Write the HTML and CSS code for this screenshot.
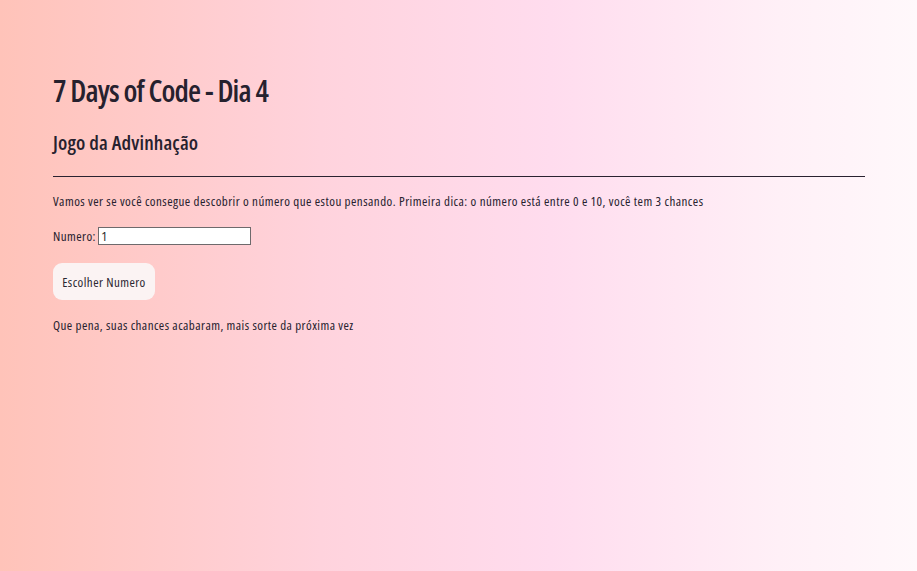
FILE: index.html
```html
<!DOCTYPE html>
<html lang="pt-BR">
<head>
<meta charset="utf-8">
<title>7 Days of Code - Dia 4</title>
<link rel="stylesheet" href="styles.css">
</head>
<body>
<main class="page">
  <h1 class="title">7 Days of Code - Dia 4</h1>
  <h2 class="subtitle">Jogo da Advinhação</h2>
  <hr class="rule">
  <p class="text">Vamos ver se você consegue descobrir o número que estou pensando. Primeira dica: o número está entre 0 e 10, você tem 3 chances</p>
  <div class="field">
    <label class="label" for="numero">Numero:</label>
    <input class="input" id="numero" type="text" value="1">
  </div>
  <button class="btn" type="button">Escolher Numero</button>
  <p class="text result">Que pena, suas chances acabaram, mais sorte da próxima vez</p>
</main>
</body>
</html>
```
FILE: styles.css
```css
html, body {
  margin: 0;
  height: 100%;
}
body {
  background: linear-gradient(to right, #ffc3b9 0%, #ffd3dd 35%, #ffdcee 60%, #fff0f7 85%, #fff8fb 100%);
  color: #26212e;
  font-family: "Open Sans", sans-serif;
  font-stretch: 75%;
}
.page {
  padding: 73px 52px 0 53px;
}
.title {
  margin: 0;
  font-size: 30px;
  font-weight: 600;
  line-height: 36px;
  letter-spacing: -0.85px;
}
.subtitle {
  margin: 22px 0 0;
  font-size: 20px;
  font-weight: 600;
  line-height: 24px;
  letter-spacing: 0.15px;
}
.rule {
  margin: 21px 0 0;
  border: 0;
  border-top: 1px solid #2a2230;
  height: 0;
}
.text {
  margin: 16px 0 0;
  font-size: 13px;
  line-height: 16px;
  letter-spacing: 0.47px;
}
.field {
  display: flex;
  align-items: center;
  gap: 2px;
  margin-top: 18px;
  font-size: 13px;
  line-height: 16px;
  letter-spacing: 0.45px;
}
.input {
  box-sizing: border-box;
  width: 153px;
  height: 18px;
  padding: 0 2px;
  border: 1px solid #6e6a6c;
  background: #fff;
  font-family: "Open Sans", sans-serif;
  font-stretch: 100%;
  font-size: 12px;
  letter-spacing: 0;
  color: #222;
}
.btn {
  display: block;
  margin-top: 18px;
  width: 102px;
  height: 37px;
  border: 0;
  border-radius: 9px;
  background: #fbf3f3;
  color: #2a2630;
  font-family: "Open Sans", sans-serif;
  font-stretch: 75%;
  font-size: 13px;
  letter-spacing: 0.45px;
  padding: 0;
}
.result {
  margin-top: 17px;
  letter-spacing: 0.45px;
}
```
